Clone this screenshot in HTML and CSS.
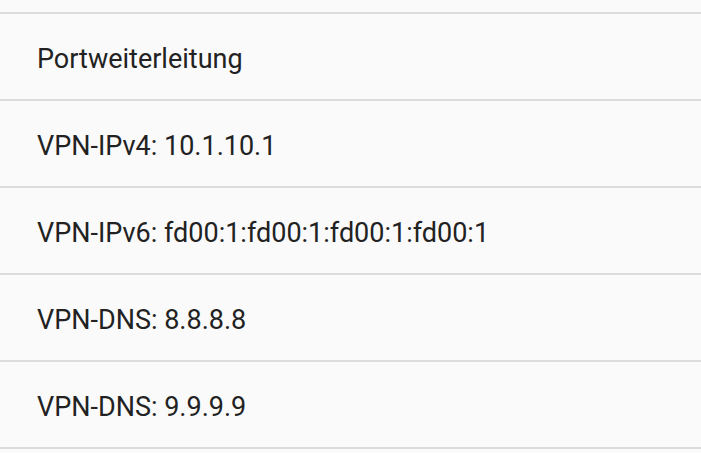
FILE: index.html
```html
<!DOCTYPE html>
<html>
<head>
<meta charset="utf-8">
<link rel="stylesheet" href="styles.css">
</head>
<body>
<div class="list">
  <div class="spacer"></div>
  <div class="row">Portweiterleitung</div>
  <div class="row">VPN-IPv4: 10.1.10.1</div>
  <div class="row">VPN-IPv6: fd00:1:fd00:1:fd00:1:fd00:1</div>
  <div class="row">VPN-DNS: 8.8.8.8</div>
  <div class="row">VPN-DNS: 9.9.9.9</div>
  <div class="spacer last"></div>
</div>
</body>
</html>
```
FILE: styles.css
```css
html, body {
  margin: 0;
  padding: 0;
  background: #fafafa;
}
.list {
  display: flex;
  flex-direction: column;
  font-family: Roboto, "Liberation Sans", sans-serif;
  color: #222222;
}
.spacer {
  height: 12px;
}
.spacer.last {
  height: 6px;
  border-top: 2px solid #dcdcdc;
}
.row {
  box-sizing: border-box;
  height: 87px;
  border-top: 2px solid #dcdcdc;
  display: flex;
  align-items: center;
  padding-left: 37px;
  padding-top: 4px;
  font-size: 27px;
}
```
